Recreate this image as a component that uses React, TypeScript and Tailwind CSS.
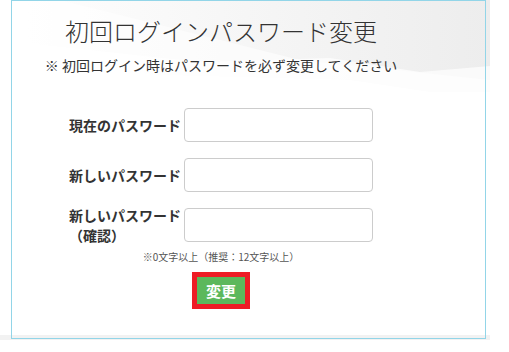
import type { ReactNode } from "react"

const font = { fontFamily: '"Noto Sans CJK JP", "Noto Sans", sans-serif' }

function HeaderBackdrop() {
  return (
    <div className="absolute left-0 top-0 h-[92px] w-[490px] overflow-hidden bg-[linear-gradient(90deg,#ffffff_0%,#f7f7f7_45%,#ededed_100%)]">
      <svg className="absolute inset-0 h-full w-full" viewBox="0 0 490 92" preserveAspectRatio="none">
        <polygon points="0,0 0,92 490,92 490,80 300,60 180,30 60,0" fill="#ffffff" fillOpacity="0.55" />
        <polygon points="0,40 0,92 490,92 490,66 420,72 330,58 200,62" fill="#ffffff" fillOpacity="0.7" />
        <polygon points="0,70 0,92 430,92 350,80 200,76" fill="#ffffff" />
      </svg>
    </div>
  )
}

function Row({ label }: { label: ReactNode }) {
  return (
    <div className="flex h-[34px] items-center gap-[3px]">
      <div className="w-[112px] text-[14px] font-bold leading-[20px] text-[#333]">{label}</div>
      <input type="password" className="h-[34px] w-[189px] rounded-[4px] border border-[#cccccc] bg-white px-2 outline-none" />
    </div>
  )
}

export default function App() {
  return (
    <div className="relative h-[352px] w-[509px] overflow-hidden bg-white" style={font}>
      <HeaderBackdrop />
      <div className="absolute left-0 top-[335px] h-[5px] w-[490px] bg-[#f2f2f2]" />

      <div className="relative ml-[11px] h-[339px] w-[475px] border border-[#92d5e8]">
        <div className="w-[418px]">
          <h1 className="mt-[14px] text-center text-[24px] font-light leading-[32px] text-[#333]">
            初回ログインパスワード変更
          </h1>
          <p className="mt-[8px] text-center text-[14px] leading-[20px] text-[#333]">
            ※ 初回ログイン時はパスワードを必ず変更してください
          </p>

          <div className="mt-[33px] flex flex-col items-center gap-[16px]">
            <Row label="現在のパスワード" />
            <Row label="新しいパスワード" />
            <Row
              label={
                <>
                  新しいパスワード
                  <br />
                  （確認）
                </>
              }
            />
          </div>

          <p className="mt-[8px] text-center text-[10px] leading-[14px] text-[#555]">※0文字以上（推奨：12文字以上）</p>

          <div className="mt-[8px] flex justify-center">
            <button className="border-[5px] border-[#ee1c25] bg-[#5cb85c] px-[9px] text-[15px] font-bold leading-[27px] text-white">
              変更
            </button>
          </div>
        </div>
      </div>
    </div>
  )
}
